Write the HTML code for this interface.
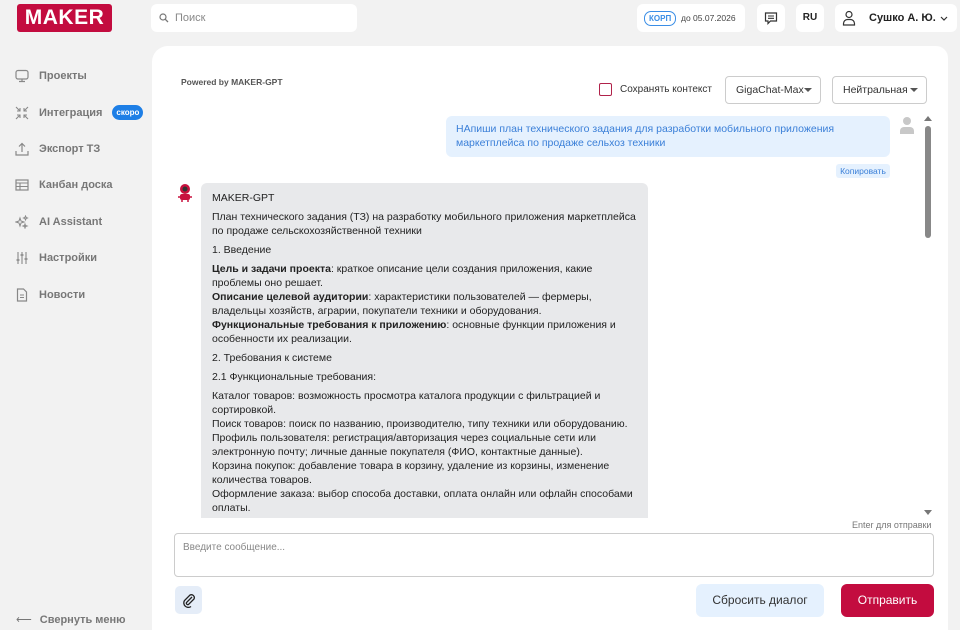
<!DOCTYPE html>
<html><head><meta charset="utf-8"><style>
*{box-sizing:border-box;margin:0;padding:0}
body{width:960px;height:630px;overflow:hidden;background:#f2f2f2;font-family:"Liberation Sans",sans-serif;color:#222;position:relative}
.abs{position:absolute}
.logo{left:17px;top:4px;width:95px;height:28px;background:#c30c3f;border-radius:3px;color:#fff;font-weight:bold;font-size:21px;line-height:28px;text-align:center;letter-spacing:0.5px}
.search{left:151px;top:4px;width:206px;height:28px;background:#fff;border-radius:6px;font-size:11px;color:#888;line-height:28px;padding-left:24px}
.box{background:#fff;border-radius:6px;top:4px;height:28px}
.nav{left:15px;font-size:11px;color:#777;font-weight:bold;display:flex;align-items:center}
.nav svg{margin-right:10px}
.panel{left:152px;top:46px;width:796px;height:584px;background:#fff;border-radius:16px 12px 0 0}
.msg{font-size:10.5px;line-height:14px;white-space:nowrap}
.msg p{margin-bottom:5px}
.btn{border-radius:6px;font-size:12px;text-align:center}
</style></head><body>
<div class="abs logo">MAKER</div>
<div class="abs search"><svg class="abs" style="left:8px;top:9px" width="10" height="10" viewBox="0 0 10 10"><circle cx="4" cy="4" r="3" fill="none" stroke="#777" stroke-width="1.2"/><path d="M6.3 6.3L9 9" stroke="#777" stroke-width="1.3"/></svg>Поиск</div>

<div class="abs box" style="left:637px;width:108px"><span class="abs" style="left:7px;top:7px;border:1.3px solid #3a8ee6;color:#3a8ee6;border-radius:7px;font-size:8px;font-weight:bold;padding:2px 4px">КОРП</span><span class="abs" style="left:44px;top:9px;font-size:8.5px;color:#444">до 05.07.2026</span></div>
<div class="abs box" style="left:757px;width:28px"><svg class="abs" style="left:7px;top:7px" width="14" height="14" viewBox="0 0 14 14"><path d="M1.5 2h11v8h-6l-2.5 2.5V10h-2.5z" fill="none" stroke="#333" stroke-width="1.2"/><path d="M4 5h6M4 7.3h6" stroke="#333" stroke-width="1.1"/></svg></div>
<div class="abs box" style="left:796px;width:28px;font-size:10px;font-weight:bold;text-align:center;line-height:28px">RU</div>
<div class="abs box" style="left:835px;width:122px"><svg class="abs" style="left:6px;top:6px" width="16" height="16" viewBox="0 0 16 16"><circle cx="8" cy="4.5" r="3" fill="none" stroke="#333" stroke-width="1.2"/><path d="M2.5 15v-1.5a4 4 0 0 1 4-4h3a4 4 0 0 1 4 4V15z" fill="none" stroke="#333" stroke-width="1.2"/></svg><span class="abs" style="left:34px;top:8px;font-size:11px;font-weight:bold;color:#222">Сушко А. Ю.</span><svg class="abs" style="left:105px;top:12px" width="8" height="6" viewBox="0 0 8 6"><path d="M1 1l3 3 3-3" fill="none" stroke="#333" stroke-width="1.2"/></svg></div>

<div class="abs nav" style="top:69px"><svg width="14" height="14" viewBox="0 0 14 14"><rect x="1" y="1.5" width="12" height="8.5" rx="2" fill="none" stroke="#888" stroke-width="1.2"/><path d="M4 12.5h6M7 10v2.5" stroke="#888" stroke-width="1.2"/></svg>Проекты</div>
<div class="abs nav" style="top:105px"><svg width="14" height="14" viewBox="0 0 14 14"><path d="M1 1l4 4M5 2v3H2M13 1l-4 4M9 2v3h3M1 13l4-4M2 9h3v3M13 13l-4-4M12 9H9v3" fill="none" stroke="#888" stroke-width="1.1"/></svg>Интеграция<span style="margin-left:10px;background:#1e7fe6;color:#fff;border-radius:8px;font-size:8px;padding:3px 4px">скоро</span></div>
<div class="abs nav" style="top:142px"><svg width="14" height="14" viewBox="0 0 14 14"><path d="M7 10V1.5M4 4.5l3-3 3 3M1 9v4h12V9" fill="none" stroke="#888" stroke-width="1.2"/></svg>Экспорт ТЗ</div>
<div class="abs nav" style="top:178px"><svg width="14" height="14" viewBox="0 0 14 14"><rect x="1" y="2" width="12" height="10" fill="none" stroke="#888" stroke-width="1.2"/><path d="M1 5h12M1 8.5h12M5 5v7" stroke="#888" stroke-width="1.1"/></svg>Канбан доска</div>
<div class="abs nav" style="top:215px"><svg width="14" height="14" viewBox="0 0 14 14"><path d="M5 3l1 3 3 1-3 1-1 3-1-3-3-1 3-1zM10.5 1l.6 1.4 1.4.6-1.4.6-.6 1.4-.6-1.4-1.4-.6 1.4-.6zM10 9l.5 1.5 1.5.5-1.5.5-.5 1.5-.5-1.5L8 11l1.5-.5z" fill="none" stroke="#888" stroke-width="1"/></svg>AI Assistant</div>
<div class="abs nav" style="top:251px"><svg width="14" height="14" viewBox="0 0 14 14"><path d="M3 1v12M7 1v12M11 1v12" stroke="#888" stroke-width="1.1"/><path d="M1.5 9h3M5.5 4h3M9.5 8h3" stroke="#888" stroke-width="1.4"/></svg>Настройки</div>
<div class="abs nav" style="top:288px"><svg width="14" height="14" viewBox="0 0 14 14"><path d="M2.5 1h6l3 3v9h-9z" fill="none" stroke="#888" stroke-width="1.2"/><path d="M5 7h4M5 9.5h4" stroke="#888" stroke-width="1.1"/></svg>Новости</div>
<div class="abs nav" style="top:613px;left:16px;color:#777"><span style="margin-right:8px;font-weight:normal">⟵</span>Свернуть меню</div>

<div class="abs panel"></div>
<div class="abs" style="left:181px;top:77px;font-size:8.5px;font-weight:bold;color:#555">Powered by MAKER-GPT</div>
<div class="abs" style="left:599px;top:83px;width:13px;height:13px;border:1.6px solid #b0224a;border-radius:2px"></div>
<div class="abs" style="left:620px;top:84px;font-size:10px;color:#333">Сохранять контекст</div>
<div class="abs" style="left:725px;top:76px;width:96px;height:28px;border:1px solid #ccc;border-radius:4px;font-size:10.5px;line-height:26px;padding-left:10px;color:#333">GigaChat-Max<span class="abs" style="right:8px;top:11px;border:4px solid transparent;border-top:4px solid #555;border-bottom:0"></span></div>
<div class="abs" style="left:832px;top:76px;width:95px;height:28px;border:1px solid #ccc;border-radius:4px;font-size:10.5px;line-height:26px;padding-left:10px;color:#333">Нейтральная<span class="abs" style="right:8px;top:11px;border:4px solid transparent;border-top:4px solid #555;border-bottom:0"></span></div>

<div class="abs msg" style="left:446px;top:116px;width:444px;height:41px;background:#e5f1fe;border-radius:6px;color:#3a7fd8;padding:6px 10px">НАпиши план технического задания для разработки мобильного приложения<br>маркетплейса по продаже сельхоз техники</div>
<svg class="abs" style="left:899px;top:116px" width="16" height="18" viewBox="0 0 16 18"><circle cx="8" cy="5" r="4" fill="#c8c8c8"/><path d="M1 18v-3a4 4 0 0 1 4-4h6a4 4 0 0 1 4 4v3z" fill="#c8c8c8"/></svg>
<div class="abs" style="left:836px;top:164px;width:54px;height:14px;background:#e5f1fe;border-radius:3px;font-size:8.5px;color:#3a7fd8;text-align:center;line-height:14px">Копировать</div>

<svg class="abs" style="left:177px;top:183px" width="16" height="20" viewBox="0 0 16 20"><circle cx="8" cy="6" r="5" fill="#c8103e"/><circle cx="8" cy="6" r="2.5" fill="#333"/><rect x="3" y="11" width="10" height="6" rx="2" fill="#c8103e"/><path d="M1 14h2M13 14h2M5 17v2M11 17v2" stroke="#c8103e" stroke-width="1.5"/></svg>
<div class="abs msg" style="left:201px;top:183px;width:447px;height:335px;background:#e8e9eb;border-radius:6px 6px 0 0;padding:8px 11px;overflow:hidden;color:#222">
<p>MAKER-GPT</p>
<p>План технического задания (ТЗ) на разработку мобильного приложения маркетплейса<br>по продаже сельскохозяйственной техники</p>
<p>1. Введение</p>
<p><b>Цель и задачи проекта</b>: краткое описание цели создания приложения, какие<br>проблемы оно решает.<br><b>Описание целевой аудитории</b>: характеристики пользователей — фермеры,<br>владельцы хозяйств, аграрии, покупатели техники и оборудования.<br><b>Функциональные требования к приложению</b>: основные функции приложения и<br>особенности их реализации.</p>
<p>2. Требования к системе</p>
<p>2.1 Функциональные требования:</p>
<p>Каталог товаров: возможность просмотра каталога продукции с фильтрацией и<br>сортировкой.<br>Поиск товаров: поиск по названию, производителю, типу техники или оборудованию.<br>Профиль пользователя: регистрация/авторизация через социальные сети или<br>электронную почту; личные данные покупателя (ФИО, контактные данные).<br>Корзина покупок: добавление товара в корзину, удаление из корзины, изменение<br>количества товаров.<br>Оформление заказа: выбор способа доставки, оплата онлайн или офлайн способами<br>оплаты.</p>
</div>

<div class="abs" style="left:924px;top:116px;width:0;height:0;border:4px solid transparent;border-bottom:5px solid #777;border-top:0"></div>
<div class="abs" style="left:925px;top:126px;width:6px;height:112px;background:#888;border-radius:3px"></div>
<div class="abs" style="left:924px;top:510px;width:0;height:0;border:4px solid transparent;border-top:5px solid #777;border-bottom:0"></div>
<div class="abs" style="left:852px;top:520px;font-size:9px;color:#777">Enter для отправки</div>

<div class="abs" style="left:174px;top:533px;width:760px;height:44px;border:1px solid #ccc;border-radius:4px;font-size:10px;color:#888;padding:8px 8px">Введите сообщение...</div>
<div class="abs" style="left:175px;top:586px;width:27px;height:28px;background:#e5edf8;border-radius:5px"><svg class="abs" style="left:6px;top:6px" width="16" height="16" viewBox="0 0 16 16"><path d="M11 5l-5.5 5.5a1.5 1.5 0 0 0 2 2L13 7a3 3 0 0 0-4-4L3.5 8.5a4.5 4.5 0 0 0 6.5 6" fill="none" stroke="#222" stroke-width="1.3"/></svg></div>
<div class="abs btn" style="left:696px;top:584px;width:128px;height:33px;background:#e5f1fe;color:#333;line-height:33px">Сбросить диалог</div>
<div class="abs btn" style="left:841px;top:584px;width:93px;height:33px;background:#c30c3f;color:#fff;line-height:33px">Отправить</div>
</body></html>
